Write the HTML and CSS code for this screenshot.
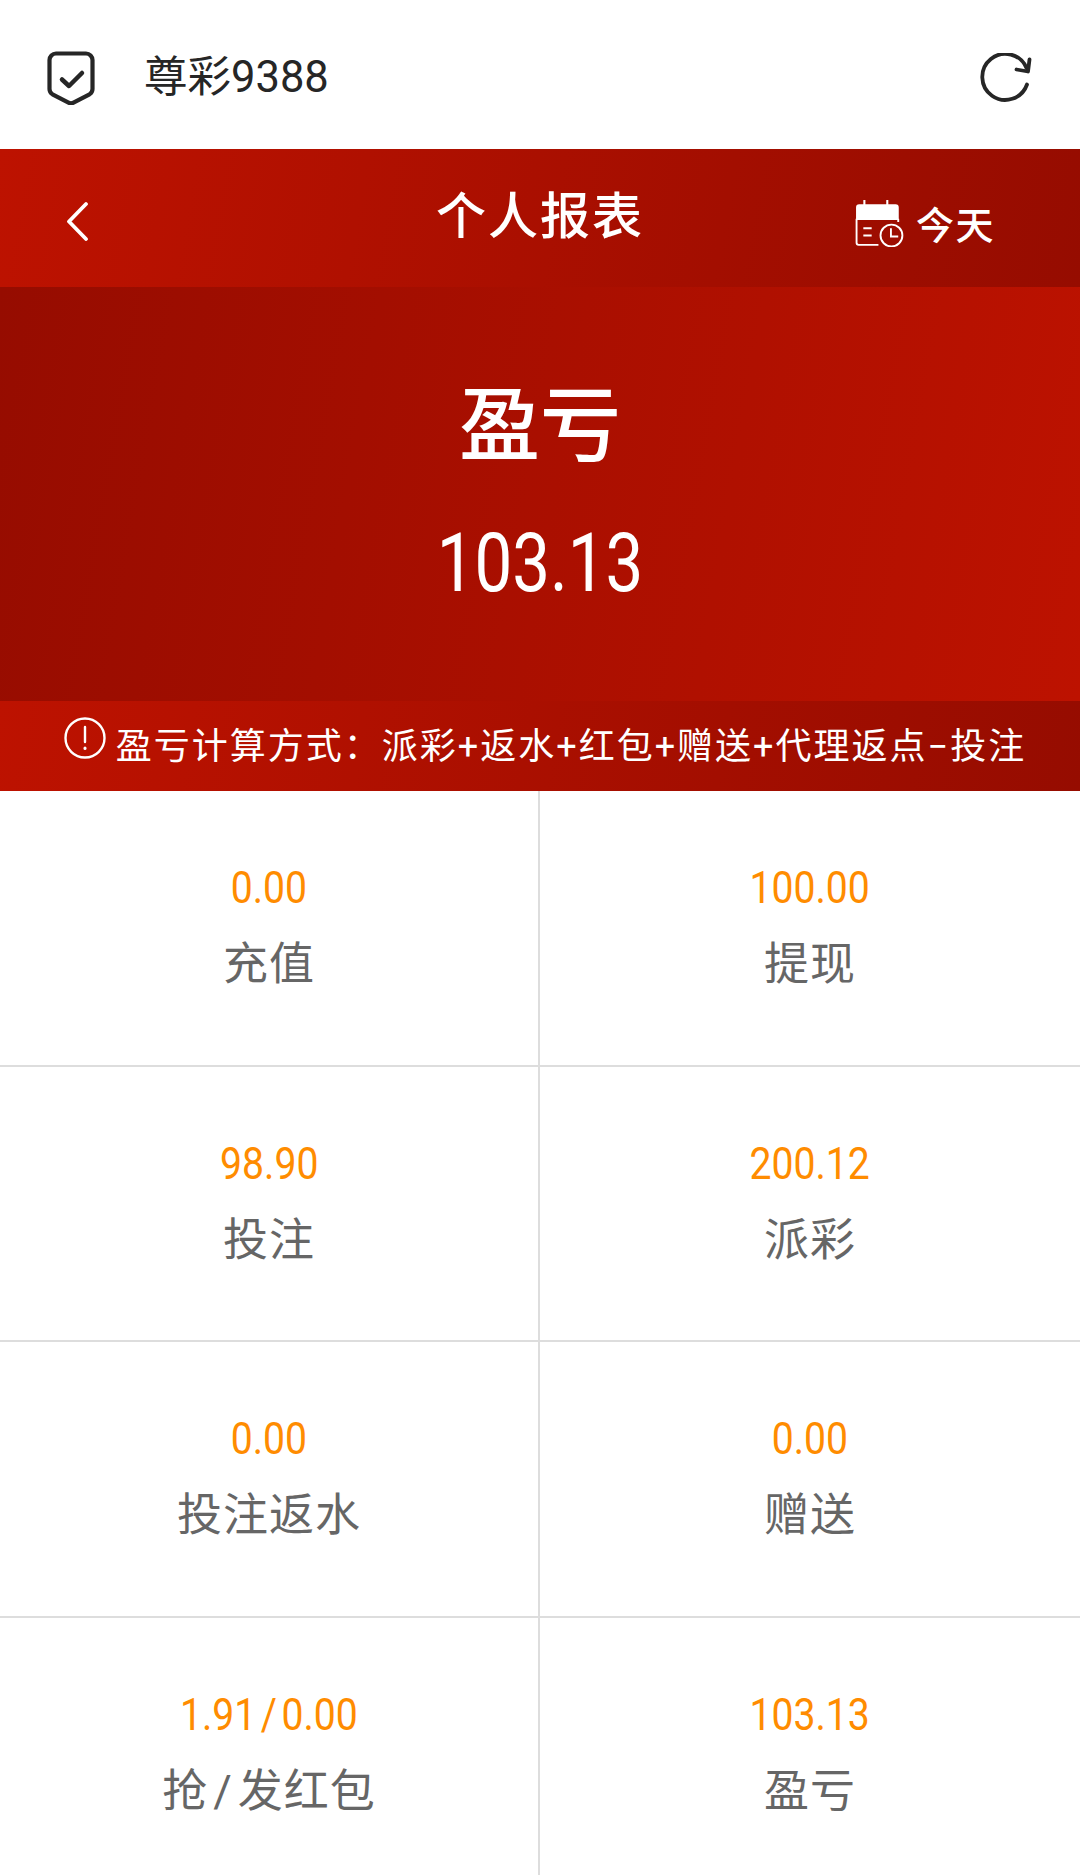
FILE: index.html
```html
<!DOCTYPE html>
<html lang="zh-CN">
  <head>
    <meta charset="UTF-8" />
    <title>个人报表</title>
    <link rel="stylesheet" href="styles.css">
  </head>
  <body>
    <header class="topbar">
      <svg class="shield" viewBox="0 0 48 54" width="48" height="54" fill="none" stroke="#262626" stroke-linecap="round" stroke-linejoin="round">
        <path stroke-width="4.200" d="M9 2.500h30a6.500 6.500 0 0 1 6.500 6.500v29q0 3.500-3 5.300l-16 8.400q-2.500 1.300-5 0l-16-8.400q-3-1.800-3-5.300V9a6.500 6.500 0 0 1 6.500-6.500z" />
        <path stroke-width="4.500" d="M15 28.500l7 6.500 13-13" />
      </svg>
      <span class="topbar-title">尊彩9388</span>
      <svg class="reload" viewBox="0 0 52 52" width="52" height="52" fill="none" stroke="#262626" stroke-width="3.800" stroke-linecap="round" stroke-linejoin="round">
        <path d="M47 31.500A23 23 0 1 1 46.500 15" />
        <path d="M49.500 6.500l-1.500 12-11.500-2" />
      </svg>
    </header>

    <nav class="navbar">
      <svg class="back" viewBox="0 0 24 40" width="24" height="40" fill="none" stroke="#fff" stroke-width="3.800" stroke-linecap="round" stroke-linejoin="round">
        <path d="M21 3L4 20.500 21 38" />
      </svg>
      <h1>个人报表</h1>
      <div class="date-pick">
        <svg viewBox="0 0 48 46" width="50" height="48" fill="none" stroke="#fff">
          <path fill="#fff" stroke="none" d="M8 1h2v4h20V1h2v4h7a3 3 0 0 1 3 3v12H1V8a3 3 0 0 1 3-3h4z" />
          <path stroke-width="1.800" d="M1.500 19v23a2 2 0 0 0 2 2h19M41.500 19v3" />
          <path stroke-width="1.800" d="M8 28h8M8 35h8" />
          <circle cx="35" cy="35" r="10.500" stroke-width="1.800" />
          <path stroke-width="1.800" d="M34.500 28v8h7" />
        </svg>
        <span>今天</span>
      </div>
    </nav>

    <section class="hero">
      <h2>盈亏</h2>
      <p>103.13</p>
    </section>

    <div class="notice">
      <svg viewBox="0 0 42 42" width="42" height="42" fill="none" stroke="#fff" stroke-width="2.400">
        <circle cx="21" cy="21" r="19.500" />
        <path stroke-linecap="round" d="M21 10v15" />
        <path stroke-linecap="round" stroke-width="3" d="M21 31v.5" />
      </svg>
      <span>盈亏计算方式：派彩+返水+红包+赠送+代理返点−投注</span>
    </div>

    <main class="stats">
      <div class="stat"><b>0.00</b><span>充值</span></div>
      <div class="stat"><b>100.00</b><span>提现</span></div>
      <div class="stat"><b>98.90</b><span>投注</span></div>
      <div class="stat"><b>200.12</b><span>派彩</span></div>
      <div class="stat"><b>0.00</b><span>投注返水</span></div>
      <div class="stat"><b>0.00</b><span>赠送</span></div>
      <div class="stat"><b>1.91<i>/</i>0.00</b><span>抢<i>/</i>发红包</span></div>
      <div class="stat"><b>103.13</b><span>盈亏</span></div>
    </main>
  </body>
</html>
```

FILE: styles.css
```css
body {
  margin: 0;
  height: 1875px;
  overflow: hidden;
  background: #fff;
  font-family: Roboto, "Noto Sans CJK SC", sans-serif;
}

h1,
h2,
p {
  margin: 0;
  font-weight: 400;
}

.topbar {
  display: flex;
  align-items: center;
  height: 149px;
  padding: 0 48px 0 47px;
  box-sizing: border-box;

  .shield {
    margin-top: 6px;
  }

  .topbar-title {
    flex: 1;
    margin-left: 49px;
    margin-top: -3px;
    font-size: 43.500px;
    color: #262626;
  }

  .reload {
    margin-top: 9px;
  }
}

.navbar {
  display: flex;
  align-items: center;
  justify-content: space-between;
  position: relative;
  height: 138px;
  padding: 0 85px 0 65px;
  box-sizing: border-box;
  background: linear-gradient(100deg, #bd1200, #960c00);
  color: #fff;

  .back {
    margin-top: 5px;
  }

  h1 {
    position: absolute;
    left: 0;
    right: 0;
    top: 38px;
    text-align: center;
    font-size: 50px;
    line-height: 60px;
    letter-spacing: 2px;
    font-weight: 500;
  }

  .date-pick {
    display: flex;
    align-items: center;
    gap: 11px;
    margin-top: 9px;
    font-size: 38px;
    letter-spacing: 1.500px;
    font-weight: 500;
  }
}

.hero {
  display: flex;
  flex-direction: column;
  align-items: center;
  height: 414px;
  padding-top: 95px;
  box-sizing: border-box;
  background: linear-gradient(100deg, #960c00, #bd1200);
  color: #fff;

  h2 {
    font-size: 81px;
    line-height: 90px;
    font-weight: 500;
  }

  p {
    margin-top: 46px;
    font-size: 82px;
    line-height: 90px;
    transform: scaleX(0.82);
  }
}

.notice {
  display: flex;
  align-items: center;
  justify-content: center;
  gap: 10px;
  height: 90px;
  padding: 0 0 7px 10px;
  box-sizing: border-box;
  background: linear-gradient(100deg, #bd1200, #960c00);
  color: #fff;
  font-size: 36px;
  letter-spacing: 2px;
  white-space: nowrap;

  svg {
    margin-top: -9px;
  }
}

.stats {
  display: grid;
  grid-template-columns: 540px 540px;
  grid-auto-rows: 275.500px;
}

.stat {
  display: flex;
  flex-direction: column;
  align-items: center;
  gap: 25px;
  padding-top: 73px;
  box-sizing: border-box;
  border-bottom: 2px solid #ddd;

  &:nth-child(odd) {
    border-right: 2px solid #ddd;
  }

  b {
    font-size: 44px;
    line-height: 48px;
    font-weight: 400;
    color: #ff8c00;
    transform: scaleX(0.89);
  }

  span {
    font-size: 45px;
    line-height: 56px;
    letter-spacing: 1px;
    color: #666;
  }

  i {
    margin: 0 5px;
    font-style: normal;
  }
}
```
